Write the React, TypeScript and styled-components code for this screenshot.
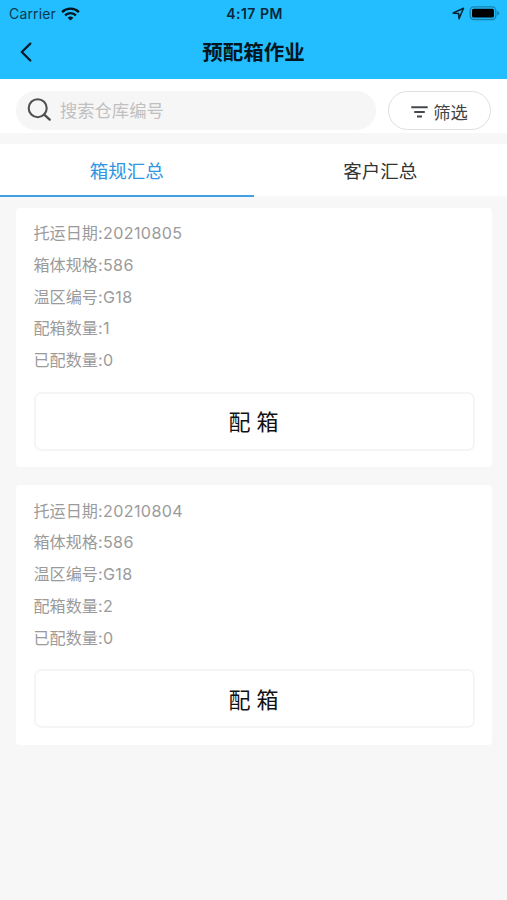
import React from "react";
import styled, { createGlobalStyle } from "styled-components";

const GlobalStyle = createGlobalStyle`
  * { box-sizing: border-box; }
  html, body { margin: 0; background: #f7f7f7; }
  body { font-family: Inter, "Noto Sans CJK SC", sans-serif; color: #111; }
  button, input { font-family: inherit; }
`;

const Screen = styled.div`
  width: 507px;
  height: 900px;
  background: #f7f7f7;
  overflow: hidden;
`;

const Header = styled.header`
  height: 79px;
  background: #22beff;
`;

const StatusBar = styled.div`
  display: grid;
  grid-template-columns: 1fr auto 1fr;
  align-items: center;
  height: 27px;
  padding: 0 7px 0 9px;
`;

const Carrier = styled.div`
  display: flex;
  align-items: center;
  gap: 5px;
  color: #0b3850;
  font-size: 14px;
  letter-spacing: 0.15px;
`;

const Clock = styled.div`
  font-size: 14px;
  font-weight: 600;
  color: #07283a;
  letter-spacing: 0.5px;
`;

const StatusIcons = styled.div`
  display: flex;
  align-items: center;
  justify-content: flex-end;
  gap: 4px;
`;

const NavBar = styled.div`
  display: grid;
  grid-template-columns: 60px 1fr 60px;
  align-items: center;
  height: 52px;
`;

const BackButton = styled.button`
  display: flex;
  height: 40px;
  padding: 0 0 2px 19px;
  align-items: center;
  border: 0;
  background: none;
`;

const Title = styled.h1`
  margin: 0;
  text-align: center;
  font-size: 20.5px;
  line-height: 30px;
  font-weight: 700;
  color: #041620;
`;

const SearchBar = styled.div`
  display: flex;
  gap: 12px;
  height: 54px;
  padding: 12px 16px 0;
  background: #fff;
`;

const SearchField = styled.label`
  display: flex;
  align-items: center;
  gap: 8px;
  width: 360px;
  height: 39px;
  padding: 0 0 2px 11px;
  border-radius: 20px;
  background: #f6f6f6;
`;

const SearchInput = styled.input`
  flex: 1;
  min-width: 0;
  padding: 2px 0 0;
  border: 0;
  outline: 0;
  background: none;
  font-size: 17.3px;
  &::placeholder { color: #c0c0c0; opacity: 1; }
`;

const FilterButton = styled.button`
  display: flex;
  align-items: center;
  justify-content: center;
  gap: 5px;
  width: 103px;
  height: 39px;
  padding: 2px 0 0;
  border: 1.5px solid #dce0e3;
  border-radius: 20px;
  background: #fff;
  color: #444;
  font-size: 17.3px;
`;

const Tabs = styled.div`
  display: grid;
  grid-template-columns: 1fr 1fr;
  height: 53px;
  margin-top: 11px;
  background: #fff;
`;

const Tab = styled.button<{ $active?: boolean }>`
  padding: 1px 0 0;
  border: 0;
  border-bottom: 2px solid ${(p) => (p.$active ? "#439fe4" : "#fcfcfc")};
  background: none;
  color: ${(p) => (p.$active ? "#2f95e3" : "#333")};
  font-size: 18.5px;
`;

const List = styled.main`
  display: flex;
  flex-direction: column;
  gap: 18px;
  padding: 11px 15px 0 16px;
`;

const Card = styled.section`
  height: 259.4px;
  padding: 10.4px 18px 0 17.5px;
  border-radius: 4px;
  background: #fff;
`;

const Field = styled.div`
  height: 31.7px;
  line-height: 31.7px;
  color: #9b9b9b;
  font-size: 16.1px;
  white-space: nowrap;
`;

const Value = styled.span`
  letter-spacing: 0.4px;
`;

const PackButton = styled.button`
  display: block;
  width: 441px;
  height: 59px;
  margin-top: 15.1px;
  padding: 0 1px 2px 0;
  border: 2px solid #f5f5f5;
  border-radius: 7px;
  background: #fff;
  color: #111;
  font-size: 22px;
`;

const WifiIcon = () => (
  <svg width="19" height="14" viewBox="0 0 19 14" fill="none" stroke="#03141e" strokeWidth="2.4">
    <path d="M1.1 5.1a12 12 0 0 1 16.8 0" />
    <path d="M4.1 8.3a7.7 7.7 0 0 1 10.8 0" />
    <path d="M6.6 10.8a4.2 4.2 0 0 1 5.8 0L9.5 13.6Z" fill="#03141e" stroke="none" />
  </svg>
);

const LocationIcon = () => (
  <svg width="13" height="13" viewBox="0 0 13 13" fill="none" stroke="#07283a" strokeWidth="1.6" strokeLinejoin="round">
    <path d="M1.2 6.1 11.5 1.3 7 11.6 6.6 6.5Z" />
  </svg>
);

const BatteryIcon = () => (
  <svg width="31" height="15" viewBox="0 0 31 15">
    <rect x="1.2" y=".9" width="25.6" height="12.6" rx="3.6" fill="none" stroke="#1682b0" strokeWidth="1.3" />
    <rect x="3" y="2.8" width="22" height="8.8" rx="1.6" fill="#000" />
    <path d="M28.2 5q2 .6 2 2.2t-2 2.2Z" fill="#1682b0" />
  </svg>
);

const BackIcon = () => (
  <svg width="14" height="22" viewBox="0 0 14 22" fill="none" stroke="#071d29" strokeWidth="2.3" strokeLinecap="round" strokeLinejoin="round">
    <path d="M11.3 2.6 2.8 11l8.5 8.5" />
  </svg>
);

const SearchIcon = () => (
  <svg width="25" height="24" viewBox="0 0 25 24" fill="none" stroke="#505050" strokeWidth="2.1" strokeLinecap="round">
    <circle cx="10.7" cy="10.2" r="9" />
    <path d="m17.2 16.6 5.5 5" strokeWidth="2.4" />
  </svg>
);

const FilterIcon = () => (
  <svg width="17" height="12" viewBox="0 0 17 12" fill="none" stroke="#444950" strokeWidth="2">
    <path d="M.3 1.2h16.4M3.2 6h10.6M6 10.5h5" />
  </svg>
);

const shipments = [
  { 托运日期: "20210805", 箱体规格: "586", 温区编号: "G18", 配箱数量: "1", 已配数量: "0" },
  { 托运日期: "20210804", 箱体规格: "586", 温区编号: "G18", 配箱数量: "2", 已配数量: "0" },
];

export default function App() {
  return (
    <>
      <GlobalStyle />
      <Screen>
        <Header>
          <StatusBar>
            <Carrier>Carrier <WifiIcon /></Carrier>
            <Clock>4:17 PM</Clock>
            <StatusIcons><LocationIcon /><BatteryIcon /></StatusIcons>
          </StatusBar>
          <NavBar>
            <BackButton aria-label="返回"><BackIcon /></BackButton>
            <Title>预配箱作业</Title>
          </NavBar>
        </Header>
        <SearchBar>
          <SearchField>
            <SearchIcon />
            <SearchInput placeholder="搜索仓库编号" />
          </SearchField>
          <FilterButton><FilterIcon />筛选</FilterButton>
        </SearchBar>
        <Tabs>
          <Tab $active>箱规汇总</Tab>
          <Tab>客户汇总</Tab>
        </Tabs>
        <List>
          {shipments.map((shipment) => (
            <Card key={shipment.托运日期}>
              {Object.entries(shipment).map(([label, value]) => (
                <Field key={label}>{label}<Value>:{value}</Value></Field>
              ))}
              <PackButton>配 箱</PackButton>
            </Card>
          ))}
        </List>
      </Screen>
    </>
  );
}
